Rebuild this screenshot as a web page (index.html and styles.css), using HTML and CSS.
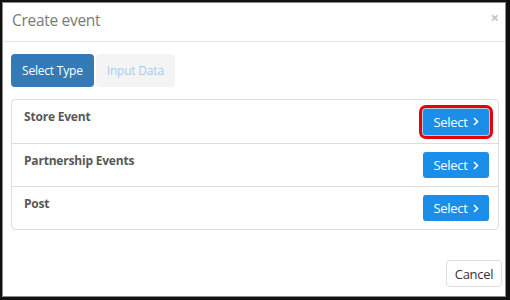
FILE: index.html
```html
<!DOCTYPE html>
<html lang="en">
<head>
  <meta charset="UTF-8" />
  <title>Create event</title>
  <link rel="stylesheet" href="styles.css">
</head>
<body>
  <div class="modal">
    <div class="modal-header">
      <h4 class="modal-title">Create event</h4>
      <span class="close">&times;</span>
    </div>

    <div class="modal-body">
      <div class="steps">
        <button class="step active">Select Type</button>
        <button class="step">Input Data</button>
      </div>

      <ul class="type-list">
        <li class="type-row">
          <span class="type-name">Store Event</span>
          <button class="btn-select focused">Select
            <svg class="chev" width="6" height="9" viewBox="0 0 6 9"><path d="M1 1l3.5 3.5L1 8" fill="none" stroke="#fff" stroke-width="1.6"/></svg>
          </button>
        </li>
        <li class="type-row">
          <span class="type-name">Partnership Events</span>
          <button class="btn-select">Select
            <svg class="chev" width="6" height="9" viewBox="0 0 6 9"><path d="M1 1l3.5 3.5L1 8" fill="none" stroke="#fff" stroke-width="1.6"/></svg>
          </button>
        </li>
        <li class="type-row">
          <span class="type-name">Post</span>
          <button class="btn-select">Select
            <svg class="chev" width="6" height="9" viewBox="0 0 6 9"><path d="M1 1l3.5 3.5L1 8" fill="none" stroke="#fff" stroke-width="1.6"/></svg>
          </button>
        </li>
      </ul>
    </div>

    <div class="modal-footer">
      <button class="btn-cancel">Cancel</button>
    </div>
  </div>
</body>
</html>
```

FILE: styles.css
```css
* {
  margin: 0;
  padding: 0;
  box-sizing: border-box;
}
html, body {
  width: 510px;
  height: 300px;
  background: #fff;
  font-family: 'Open Sans', 'Noto Sans', sans-serif;
  color: #555;
  overflow: hidden;
}
.modal {
  width: 510px;
  height: 300px;
  border-style: solid;
  border-color: #111;
  border-width: 2px 4px 3px 2px;
  box-shadow: inset 0 0 0 1px #8a8a8a;
  padding: 1px;
  display: flex;
  flex-direction: column;
}
.modal-header {
  height: 39px;
  padding: 0 6px 0 9px;
  border-bottom: 1px solid #e5e5e5;
  display: flex;
  justify-content: space-between;
  align-items: center;
}
.modal-title {
  margin-top: -4px;
  font-size: 15.5px;
  font-weight: 400;
  color: #7a7a7a;
  letter-spacing: -0.3px;
}
.close {
  align-self: flex-start;
  margin-top: 7px;
  font-size: 15px;
  line-height: 15px;
  font-weight: 700;
  color: #c4c4c4;
}
.modal-body {
  padding: 12px 6px 0 8px;
}
.steps {
  display: flex;
  gap: 2px;
  margin-bottom: 12px;
}
.step {
  height: 33px;
  border: none;
  border-radius: 4px;
  font-family: inherit;
  font-size: 12px;
  padding: 0 11px;
  background: #f4f4f4;
  color: #a9c9f3;
  letter-spacing: -0.2px;
}
.step.active {
  background: #337ab7;
  color: #fff;
}
.type-list {
  list-style: none;
  border: 1px solid #ddd;
  border-radius: 4px;
}
.type-row {
  height: 43px;
  display: flex;
  justify-content: space-between;
  align-items: center;
  padding: 0 9px 0 12px;
  border-top: 1px solid #ddd;
}
.type-row:first-child {
  border-top: none;
}
.type-name {
  align-self: flex-start;
  padding-top: 8px;
  font-size: 12px;
  font-weight: 700;
  color: #585858;
  letter-spacing: -0.2px;
}
.btn-select {
  width: 66px;
  height: 26px;
  border: none;
  border-radius: 3px;
  background: #1a8ee8;
  color: #fff;
  font-family: inherit;
  font-size: 13px;
  letter-spacing: -0.3px;
  display: flex;
  align-items: center;
  justify-content: center;
  gap: 5px;
}
.btn-select.focused {
  box-shadow: 0 0 0 1px #b3c9de, 0 0 0 4px #e8000b;
}
.modal-footer {
  margin-top: auto;
  padding: 0 3px 9px 0;
  display: flex;
  justify-content: flex-end;
}
.btn-cancel {
  width: 56px;
  height: 27px;
  border: 1px solid #ddd;
  border-radius: 4px;
  background: #fff;
  color: #333;
  font-family: inherit;
  font-size: 13px;
  letter-spacing: -0.3px;
}
```
